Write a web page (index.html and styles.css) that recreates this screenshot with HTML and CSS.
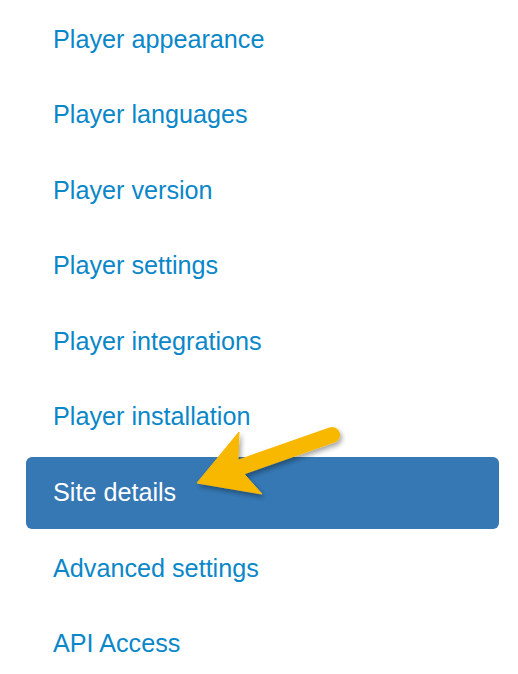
FILE: index.html
```html
<!DOCTYPE html>
<html>
<head>
<meta charset="utf-8">
<link rel="stylesheet" href="styles.css">
</head>
<body>
<nav class="menu">
  <a class="item" href="#">Player appearance</a>
  <a class="item" href="#">Player languages</a>
  <a class="item" href="#">Player version</a>
  <a class="item" href="#">Player settings</a>
  <a class="item" href="#">Player integrations</a>
  <a class="item" href="#">Player installation</a>
  <a class="item active" href="#">Site details</a>
  <a class="item" href="#">Advanced settings</a>
  <a class="item" href="#">API Access</a>
</nav>
<svg class="arrow" width="518" height="674" viewBox="0 0 518 674">
  <defs>
    <filter id="sh" x="-20%" y="-20%" width="140%" height="140%">
      <feDropShadow dx="2" dy="3" stdDeviation="2.5" flood-color="#000" flood-opacity="0.35"/>
    </filter>
  </defs>
  <g filter="url(#sh)" fill="#f8b800" stroke="#f8b800">
    <line x1="241" y1="467" x2="332" y2="435" stroke-width="16" stroke-linecap="round"/>
    <polygon points="197,483 239,432 238,459 245,475 262,494" stroke-width="1" stroke-linejoin="round"/>
  </g>
</svg>
</body>
</html>
```
FILE: styles.css
```css
html, body {
  margin: 0;
  padding: 0;
  background: #ffffff;
}
body {
  width: 518px;
  height: 674px;
  overflow: hidden;
  position: relative;
  font-family: "Liberation Sans", Arial, sans-serif;
}
.menu {
  display: flex;
  flex-direction: column;
  gap: 3.6px;
  padding: 3px 19px 0 26px;
}
.item {
  display: flex;
  align-items: center;
  height: 72px;
  padding-left: 27px;
  font-size: 25.2px;
  color: #0a87c9;
  text-decoration: none;
  border-radius: 6px;
}
.item.active {
  background: #3578b4;
  color: #ffffff;
}
.arrow {
  position: absolute;
  left: 0;
  top: 0;
  pointer-events: none;
}
```
